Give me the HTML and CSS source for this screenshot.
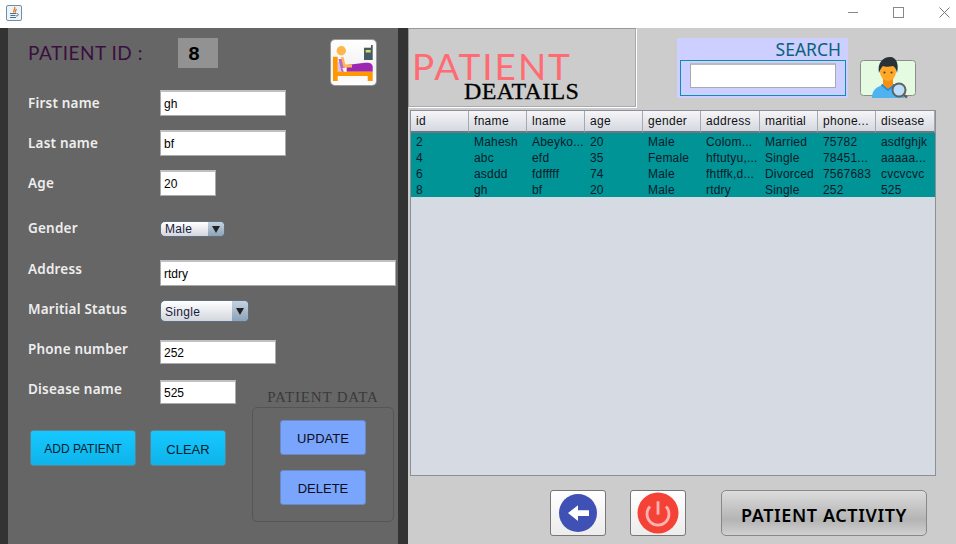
FILE: index.html
```html
<!DOCTYPE html>
<html>
  <head>
    <meta charset="UTF-8"/>
    <title>Patient Details</title>
    <link rel="stylesheet" href="styles.css">
  </head>
  <body>
    <header class="titlebar">
      <svg class="java-icon" width="16" height="16" viewBox="0 0 16 16">
        <rect x="0.5" y="0.5" width="15" height="15" rx="1.5" fill="#eef3f8" stroke="#6f8fa8"/>
        <path d="M8.500 2C10 4 6.500 5 8 7.500M10.500 4C9.500 5.500 9 6 9.500 7.500" fill="none" stroke="#e8761a" stroke-width="1.300"/>
        <path d="M4 8.500H10M4.500 10.500H9.500M4 12.500H10M10.500 8.500C13 8.500 13 11 10 11" fill="none" stroke="#47708f" stroke-width="1"/>
      </svg>
      <div class="win-controls">
        <span class="win-min"></span>
        <span class="win-max"></span>
        <svg class="win-close" width="11" height="11" viewBox="0 0 11 11">
          <path d="M0.500 0.500L10.500 10.500M10.500 0.500L0.500 10.500" stroke="#777" stroke-width="1"/>
        </svg>
      </div>
    </header>

    <main class="app">
      <section class="form-panel">
        <div class="id-row">
          <span class="id-label">PATIENT ID :</span>
          <span class="id-value">8</span>
          <div class="bed-btn">
            <svg width="45" height="45" viewBox="0 0 45 45">
              <circle cx="10.300" cy="10.700" r="4.700" fill="#ffb74d"/>
              <path d="M6.700 22H12V32H6.700Z" fill="#e1bee7"/>
              <path d="M7.500 19H11L14 28H11L13 31.700H10.500Z" fill="#ba68c8"/>
              <path d="M15.700 31.700V25L34 22.700C39 22.300 41.700 23.500 41.700 27V31.700Z" fill="#9c27b0"/>
              <path d="M10 17H12.500L14.300 24.500H21V27.500H12.500Z" fill="#ffb74d"/>
              <path d="M2 16.700H6.700V31.700H41.700V41H36.700V36H6.700V41H2Z" fill="#ff9800"/>
              <rect x="33" y="7.700" width="8.700" height="12.300" fill="#455a64"/>
              <rect x="40" y="5" width="1.700" height="3" fill="#455a64"/>
              <rect x="34.700" y="10" width="5" height="2.500" fill="#d4e157"/>
            </svg>
          </div>
        </div>

        <div class="fields">
          <label class="f-label">First name</label>
          <input class="f-input w-125" value="gh">
          <label class="f-label">Last name</label>
          <input class="f-input w-125" value="bf">
          <label class="f-label">Age</label>
          <input class="f-input w-55" value="20">
          <label class="f-label lift-more">Gender</label>
          <div class="combo combo-gender"><span>Male</span><i></i></div>
          <label class="f-label lift">Address</label>
          <input class="f-input w-236" value="rtdry">
          <label class="f-label lift">Maritial Status</label>
          <div class="combo combo-marital"><span>Single</span><i></i></div>
          <label class="f-label lift">Phone number</label>
          <input class="f-input w-115 short" value="252">
          <label class="f-label lift">Disease name</label>
          <input class="f-input w-75 short" value="525">
        </div>

        <div class="actions">
          <div class="main-actions">
            <button class="btn-cyan btn-add">ADD PATIENT</button>
            <button class="btn-cyan btn-clear">CLEAR</button>
          </div>
          <div class="data-group">
            <div class="data-title">PATIENT DATA</div>
            <div class="data-box">
              <button class="btn-blue">UPDATE</button>
              <button class="btn-blue">DELETE</button>
            </div>
          </div>
        </div>
      </section>

      <section class="detail-panel">
        <div class="top-row">
          <div class="title-box">
            <div class="title-main">PATIENT</div>
            <div class="title-sub">DEATAILS</div>
          </div>
          <div class="search-box">
            <div class="search-title">SEARCH</div>
            <div class="search-well"><input class="search-input"></div>
          </div>
          <div class="search-btn">
            <svg width="56" height="36" viewBox="0 0 56 36">
              <rect x="0.500" y="0.500" width="55" height="35" rx="3" fill="#e4fbe2" stroke="#8a8f8a"/>
              <path d="M12 38C12 31 15 28 22 25L28 27L34 25C41 28 44 31 44 38Z" fill="#4fb3f0"/>
              <path d="M21 25.500L28 31L35 25.500L34 24H22Z" fill="#1e88e5"/>
              <path d="M23 17H33V25L28 29L23 25Z" fill="#f78f12"/>
              <ellipse cx="28" cy="12" rx="8" ry="9" fill="#ffa726"/>
              <path d="M19 13C17 3 23 -3 30 -3C37 -3 39 5 37 13C36 9 35 7 33 6C29 7 25 7 23 6C21 8 20 10 19 13Z" fill="#263238"/>
              <circle cx="24.500" cy="12.500" r="1" fill="#4e342e"/>
              <circle cx="31.500" cy="12.500" r="1" fill="#4e342e"/>
              <circle cx="39" cy="30" r="6.500" fill="#bbdefb" stroke="#616161" stroke-width="2"/>
              <path d="M44 35L47 37.500" stroke="#616161" stroke-width="2.500"/>
            </svg>
          </div>
        </div>

        <div class="table-box">
          <table class="grid">
            <thead>
              <tr>
                <th>id</th><th>fname</th><th>lname</th><th>age</th><th>gender</th><th class="col-wide">address</th><th>maritial</th><th>phone...</th><th class="col-wide">disease</th>
              </tr>
            </thead>
            <tbody>
              <tr><td>2</td><td>Mahesh</td><td>Abeyko...</td><td>20</td><td>Male</td><td>Colom...</td><td>Married</td><td>75782</td><td>asdfghjk</td></tr>
              <tr><td>4</td><td>abc</td><td>efd</td><td>35</td><td>Female</td><td>hftutyu,...</td><td>Single</td><td>78451...</td><td>aaaaa...</td></tr>
              <tr><td>6</td><td>asddd</td><td>fdfffff</td><td>74</td><td>Male</td><td>fhtffk,d...</td><td>Divorced</td><td>7567683</td><td>cvcvcvc</td></tr>
              <tr><td>8</td><td>gh</td><td>bf</td><td>20</td><td>Male</td><td>rtdry</td><td>Single</td><td>252</td><td>525</td></tr>
            </tbody>
          </table>
        </div>

        <div class="bottom-row">
          <button class="icon-btn">
            <svg width="38" height="38" viewBox="0 0 38 38">
              <circle cx="19" cy="19" r="19" fill="#3f51b5"/>
              <path d="M9 19L19 11.300V16.300H30V22H19V27Z" fill="#fff"/>
            </svg>
          </button>
          <button class="icon-btn btn-power">
            <svg width="42" height="42" viewBox="0 0 42 42">
              <circle cx="21" cy="21" r="20.500" fill="#f44336"/>
              <path d="M13 14.500A11 11 0 1 0 29 14.500" fill="none" stroke="#ffb3b3" stroke-width="2.800"/>
              <path d="M21 9.300V22.600" stroke="#ffb3b3" stroke-width="2.800"/>
            </svg>
          </button>
          <button class="activity-btn">PATIENT ACTIVITY</button>
        </div>
      </section>
    </main>
  </body>
</html>
```

FILE: styles.css
```css
html, body { padding: 0; margin: 0; }
body {
    width: 956px;
    height: 544px;
    overflow: hidden;
    font-family: "Liberation Sans", sans-serif;
    background: #ccc;
}
button { font-family: inherit; padding: 0; cursor: pointer; }

/* window chrome */
.titlebar {
    height: 28px;
    background: #fff;
    display: flex;
    align-items: center;
    justify-content: space-between;
    padding-left: 6px;
    box-sizing: border-box;
}
.java-icon { margin-top: -3px; }
.win-controls {
    display: flex;
    align-items: center;
    margin-top: -3px;
    padding-right: 6px;
}
.win-min { width: 10px; height: 1px; background: #888; margin-right: 35px; }
.win-max { width: 9px; height: 9px; border: 1px solid #888; margin-right: 35px; }

.app { display: flex; height: 516px; }

/* left form */
.form-panel {
    width: 390px;
    height: 516px;
    box-sizing: border-box;
    margin-left: 8px;
    background: #666;
    padding: 10px 0 0 20px;
    box-shadow: -8px 0 0 #333, 10px 0 0 #333;
}
.id-row { display: flex; align-items: flex-start; height: 52px; }
.id-label {
    font-family: "Lato", sans-serif;
    font-size: 19px;
    color: #3a0f3f;
    letter-spacing: 0.5px;
    width: 150px;
    line-height: 30px;
}
.id-value {
    width: 40px;
    height: 30px;
    background: #929292;
    font: bold 20px/33px "Liberation Mono", monospace;
    color: #000;
    padding-left: 10px;
    box-sizing: border-box;
}
.bed-btn {
    margin: 2px 0 0 113px;
    width: 45px;
    height: 45px;
    border-radius: 4px;
    background: linear-gradient(#fff, #f2f2f2 60%, #fff);
    box-shadow: 0 0 0 1px #999;
}

.fields {
    display: grid;
    grid-template-columns: 132px auto;
    grid-template-rows: 40px 40px 51px 39px 40px 40px 40px 40px;
    justify-items: start;
    align-items: start;
}
.f-label {
    font-family: "Noto Sans", sans-serif;
    font-weight: 600;
    font-size: 13.500px;
    color: #eee;
    line-height: 26px;
    letter-spacing: 0.2px;
}
.lift { margin-top: -4px; }
.lift-more { margin-top: -6px; }
.f-input {
    height: 26px;
    box-sizing: border-box;
    border: 1px solid #aaa;
    border-top: 2px solid #c0c0c0;
    padding: 0 3px;
    font: 12px "Liberation Sans", sans-serif;
    color: #000;
    background: #fff;
    outline: 0;
}
.f-input.short { height: 24px; }
.w-125 { width: 126px; }
.w-55 { width: 56px; }
.w-236 { width: 236px; }
.w-115 { width: 116px; }
.w-75 { width: 76px; }

.combo {
    display: flex;
    justify-content: space-between;
    box-sizing: border-box;
    border: 1px solid #5f6f80;
    border-radius: 5px;
    background: linear-gradient(#fff, #d2d6de);
    font-size: 12px;
    letter-spacing: 0.3px;
    color: #1a1a3a;
    overflow: hidden;
    padding-left: 4px;
}
.combo i {
    display: block;
    width: 16px;
    background: linear-gradient(#c5d3e0, #8ba2b8);
    position: relative;
}
.combo i::after {
    content: "";
    position: absolute;
    left: 50%;
    top: 50%;
    margin: -3px 0 0 -4px;
    border-style: solid;
    border-width: 7px 4px 0 4px;
    border-color: #222 transparent transparent;
}
.combo-gender { width: 65px; height: 16px; line-height: 15px; }
.combo-marital { width: 89px; height: 22px; line-height: 22px; }

.actions { position: relative; margin-top: 10px; }
.main-actions {
    display: flex;
    gap: 14px;
    margin-left: 2px;
}
.btn-cyan {
    height: 36px;
    padding-top: 2px;
    border: 1px solid #5f8190;
    border-radius: 3px;
    background: linear-gradient(#15c8ff, #0eb4ea);
    color: #00202e;
    font-size: 12px;
}
.btn-add { width: 106px; }
.btn-clear { width: 76px; font-size: 13px; }

/* sits over the lower right of the form */
.data-group { position: absolute; left: 224px; top: -43px; width: 142px; }
.data-title {
    font-family: "Liberation Serif", serif;
    font-size: 15px;
    color: #3a3a3a;
    text-align: center;
    letter-spacing: 0.8px;
    line-height: 20px;
}
.data-box {
    height: 115px;
    box-sizing: border-box;
    border: 1px solid #555;
    border-radius: 5px;
    display: flex;
    flex-direction: column;
    align-items: center;
    gap: 15px;
    padding-top: 12px;
}
.btn-blue {
    width: 86px;
    height: 35px;
    padding-top: 2px;
    border: 1px solid #6c89c4;
    border-radius: 3px;
    background: #7aa5fd;
    color: #0c0c1c;
    font-size: 13px;
}

/* right side */
.detail-panel { margin-left: 10px; flex: 1; }
.top-row { display: flex; align-items: flex-start; height: 82px; }
.title-box {
    width: 229px;
    height: 80px;
    box-sizing: border-box;
    border: 1px solid #fff;
    border-top-color: #999;
    border-left-color: #999;
    box-shadow: inset -1px -1px 0 #aaa;
    padding: 22px 0 0 3px;
}
.title-main {
    font-family: "Lato", sans-serif;
    font-size: 37px;
    line-height: 30px;
    letter-spacing: 1.900px;
    color: #ff6b73;
}
.title-sub {
    font-family: "Liberation Serif", serif;
    font-size: 24px;
    line-height: 20px;
    margin-left: 52px;
    letter-spacing: 0.3px;
    -webkit-text-stroke: 0.3px #000;
    color: #000;
}
.search-box {
    margin: 10px 0 0 40px;
    width: 171px;
    height: 60px;
    box-sizing: border-box;
    background: #cccfff;
    padding: 0 2px 0 3px;
}
.search-title {
    text-align: right;
    font-family: "Noto Sans", sans-serif;
    font-size: 17.500px;
    line-height: 22px;
    color: #0b6278;
    padding-right: 5px;
}
.search-well {
    height: 36px;
    box-sizing: border-box;
    border: 1px solid #0c8fa8;
    padding: 2px 9px 0;
}
.search-input {
    display: block;
    width: 146px;
    height: 25px;
    box-sizing: border-box;
    border: 1px solid #aaa;
    border-top: 2px solid #bbb;
    background: #fff;
    outline: 0;
}
.search-btn { margin: 32px 0 0 12px; width: 56px; height: 36px; }
.search-btn svg { overflow: visible; display: block; }

.table-box {
    margin-left: 2px;
    width: 526px;
    height: 366px;
    box-sizing: border-box;
    border: 1px solid #8b8f98;
    background: #d6dae3;
}
.grid {
    border-collapse: separate;
    border-spacing: 0;
    table-layout: fixed;
    width: 524px;
    font-size: 12px;
    color: #111;
}
.grid th {
    height: 22px;
    padding: 0 0 0 5px;
    box-sizing: border-box;
    width: 58px;
    font-weight: normal;
    text-align: left;
    background: linear-gradient(#f6f6f8, #d5d8e0);
    border-right: 1px solid #a5a8b0;
    border-bottom: 2px solid #707680;
    letter-spacing: 0.3px;
    white-space: nowrap;
}
.grid th.col-wide { width: 59px; }
.grid tbody tr { background: #009496; }
.grid td {
    height: 16px;
    padding: 2px 0 0 5px;
    line-height: 14px;
    box-sizing: border-box;
    white-space: nowrap;
    overflow: hidden;
    letter-spacing: 0.2px;
    color: #0a1a2a;
}

.bottom-row {
    display: flex;
    align-items: center;
    margin: 14px 0 0 142px;
}
.icon-btn {
    width: 56px;
    height: 46px;
    box-sizing: border-box;
    border: 1px solid #777;
    border-radius: 3px;
    background: linear-gradient(#fff, #ececec);
    display: flex;
    align-items: center;
    justify-content: center;
    margin-right: 24px;
}
.btn-power { margin-right: 35px; }
.activity-btn {
    width: 206px;
    height: 46px;
    padding-top: 3px;
    border: 1px solid #888;
    border-radius: 5px;
    background: linear-gradient(#dcdcdc, #b4b4b4 65%, #d0d0d0);
    font-family: "Noto Sans", sans-serif;
    font-weight: 600;
    font-size: 18px;
    letter-spacing: 0.6px;
    color: #000;
}
```
